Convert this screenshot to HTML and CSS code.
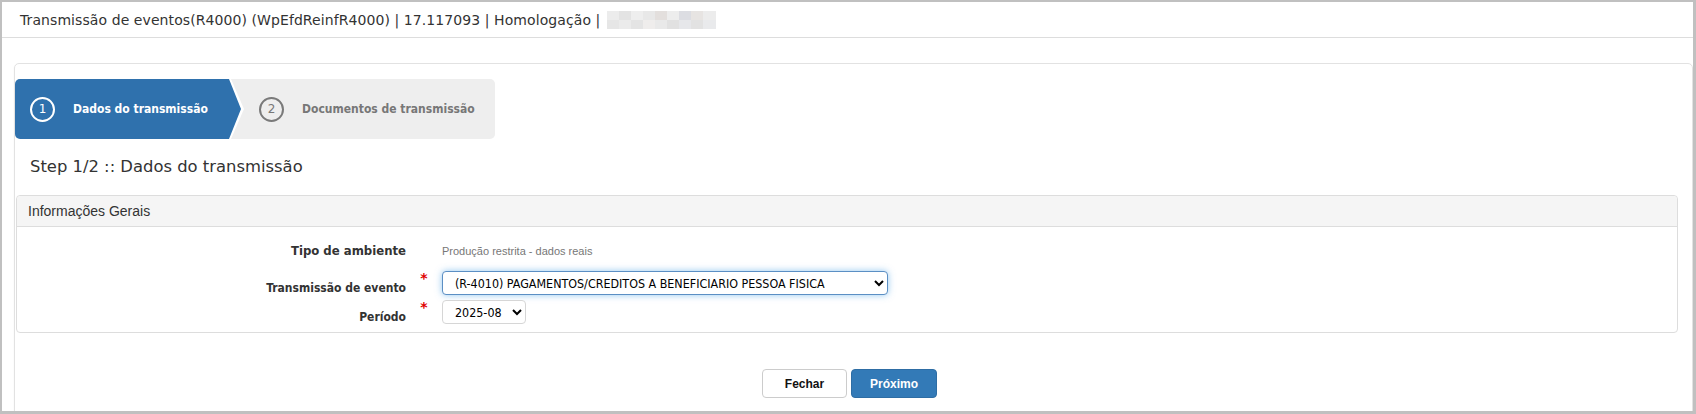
FILE: index.html
```html
<!DOCTYPE html>
<html lang="pt-BR">
  <head>
    <meta charset="UTF-8" />
    <meta name="viewport" content="width=device-width, initial-scale=1.0" />
    <link rel="stylesheet" href="styles.css">
    <title>Transmissão de eventos(R4000)</title>
  </head>
  <body>
    <div class="frame">
      <div class="page-header">
        <span class="page-title">Transmissão de eventos(R4000) (WpEfdReinfR4000) | 17.117093 | Homologação |</span>
        <span class="blurred"></span>
      </div>

      <div class="main">
        <div class="card">
          <div class="stepper">
            <div class="step step-active">
              <div class="step-inner">
                <span class="step-num">1</span>
                <span class="step-label">Dados do transmissão</span>
              </div>
            </div>
            <div class="step step-next">
              <span class="step-num">2</span>
              <span class="step-label">Documentos de transmissão</span>
            </div>
          </div>

          <h2 class="step-title">Step 1/2 :: Dados do transmissão</h2>

          <div class="panel">
            <div class="panel-heading">Informações Gerais</div>
            <div class="panel-body">
              <div class="form-row row-info">
                <label class="form-label">Tipo de ambiente</label>
                <span class="req"></span>
                <span class="form-static">Produção restrita - dados reais</span>
              </div>
              <div class="form-row">
                <label class="form-label" for="evento">Transmissão de evento</label>
                <span class="req">*</span>
                <div>
                  <select id="evento" class="form-select select-wide focused">
                    <option>(R-4010) PAGAMENTOS/CREDITOS A BENEFICIARIO PESSOA FISICA</option>
                  </select>
                </div>
              </div>
              <div class="form-row">
                <label class="form-label" for="periodo">Período</label>
                <span class="req">*</span>
                <div>
                  <select id="periodo" class="form-select select-small">
                    <option>2025-08</option>
                  </select>
                </div>
              </div>
            </div>
          </div>

          <div class="actions">
            <button class="btn btn-default">Fechar</button>
            <button class="btn btn-primary">Próximo</button>
          </div>
        </div>
      </div>
    </div>
  </body>
</html>
```

FILE: styles.css
```css
* {
  box-sizing: border-box;
}

html,
body {
  margin: 0;
  padding: 0;
  background: #ffffff;
  overflow: hidden;
}

.frame {
  width: 1696px;
  height: 414px;
  border-style: solid;
  border-color: #c0c0c0;
  border-width: 2px 3px 3px 2px;
  overflow: hidden;
  font-family: "DejaVu Sans", Verdana, sans-serif;
  color: #333;
}

.page-header {
  display: flex;
  align-items: center;
  height: 36px;
  padding-left: 18px;
  border-bottom: 1px solid #dddddd;
}

.page-title {
  font-size: 14px;
  letter-spacing: 0.08px;
  color: #333;
}

.blurred {
  display: inline-block;
  width: 109px;
  height: 18px;
  margin-left: 7px;
  background:
    linear-gradient(90deg, #ececec 0 12px, #e3e3e3 12px 24px, #eeeeee 24px 36px, #e8e8e8 36px 48px, #e3dfdd 48px 60px, #ededed 60px 72px, #dcdde2 72px 84px, #e7e4e2 84px 96px, #ececec 96px) top / 100% 50% no-repeat,
    linear-gradient(90deg, #e6e6e6 0 12px, #ebebeb 12px 24px, #e4e4e4 24px 36px, #efedec 36px 48px, #e9e9e9 48px 60px, #e1e1e1 60px 72px, #e6e7ea 72px 84px, #e2e2e2 84px 96px, #e9eaec 96px) bottom / 100% 50% no-repeat;
}

.main {
  padding: 25px 0 0 12px;
}

.card {
  height: 360px;
  border: 1px solid #e2e2e2;
  border-radius: 5px;
  box-shadow: 0 1px 2px rgba(0, 0, 0, 0.06);
  padding: 15px 14px 0 0;
}

/* stepper */
.stepper {
  display: flex;
  width: 480px;
  height: 60px;
  background: #eeeeee;
  border-radius: 5px;
  overflow: hidden;
}

.step {
  display: flex;
  align-items: center;
  font-family: "DejaVu Sans Condensed", "DejaVu Sans", sans-serif;
  font-size: 12px;
  font-weight: bold;
}

.step-active {
  width: 229px;
  height: 60px;
  background: #ffffff;
  clip-path: polygon(0 0, 216px 0, 100% 50%, 216px 100%, 0 100%);
}

.step-inner {
  display: flex;
  align-items: center;
  width: 226px;
  height: 60px;
  padding-left: 15px;
  background: #2f71ad;
  color: #ffffff;
  clip-path: polygon(0 0, 214px 0, 100% 50%, 214px 100%, 0 100%);
}

.step-next {
  padding-left: 15px;
  color: #777777;
}

.step-num {
  display: inline-flex;
  align-items: center;
  justify-content: center;
  width: 25px;
  height: 25px;
  border: 2px solid currentColor;
  border-radius: 50%;
  font-family: "DejaVu Sans", sans-serif;
  font-size: 12px;
  font-weight: normal;
  margin-right: 18px;
}

.step-next .step-num {
  border-color: #7a7a7a;
}

.step-title {
  margin: 0;
  padding: 18px 0 0 15px;
  height: 56px;
  font-size: 16.4px;
  font-weight: normal;
  color: #333;
}

/* panel */
.panel {
  margin-left: 1px;
  border: 1px solid #dddddd;
  border-radius: 4px;
}

.panel-heading {
  height: 31px;
  padding: 0 11px;
  display: flex;
  align-items: center;
  background: #f5f5f5;
  border-bottom: 1px solid #dddddd;
  border-radius: 4px 4px 0 0;
  font-family: "Liberation Sans", Arial, sans-serif;
  font-size: 14px;
  color: #333;
}

.panel-body {
  padding: 12px 0 7px;
}

.form-row {
  display: grid;
  grid-template-columns: 389px 36px 1fr;
  height: 25px;
  margin-top: 4px;
}

.row-info {
  height: 24px;
  margin-top: 0;
  margin-bottom: 8px;
  align-items: center;
}

.form-label {
  align-self: end;
  text-align: right;
  font-family: "DejaVu Sans Condensed", "DejaVu Sans", sans-serif;
  font-size: 12px;
  font-weight: bold;
  color: #333;
  line-height: 16px;
}

.row-info .form-label {
  align-self: center;
  font-size: 13px;
}

.req {
  color: #e00000;
  font-size: 14px;
  font-weight: bold;
  text-align: center;
  line-height: 14px;
}

.form-static {
  font-family: "Liberation Sans", Arial, sans-serif;
  font-size: 11px;
  color: #777777;
}

.form-select {
  height: 24px;
  padding: 0 6px 0 8px;
  font-family: "DejaVu Sans Condensed", "DejaVu Sans", sans-serif;
  font-size: 12.4px;
  color: #000;
  background: #ffffff;
  border: 1px solid #d6d6d6;
  border-radius: 4px;
}

.select-wide {
  width: 446px;
}

.select-small {
  width: 84px;
}

.focused {
  border-color: #5b8fc4;
  outline: none;
  box-shadow: 0 0 7px rgba(102, 175, 233, 0.7);
}

/* buttons */
.actions {
  display: flex;
  justify-content: center;
  gap: 4px;
  margin-top: 36px;
  padding-left: 6px;
}

.btn {
  height: 29px;
  font-family: "Liberation Sans", Arial, sans-serif;
  font-size: 12px;
  font-weight: bold;
  border-radius: 4px;
  cursor: pointer;
}

.btn-default {
  width: 85px;
  background: #ffffff;
  color: #111;
  border: 1px solid #cccccc;
}

.btn-primary {
  width: 86px;
  background: #337ab7;
  color: #ffffff;
  border: 1px solid #2e6da4;
}
```
